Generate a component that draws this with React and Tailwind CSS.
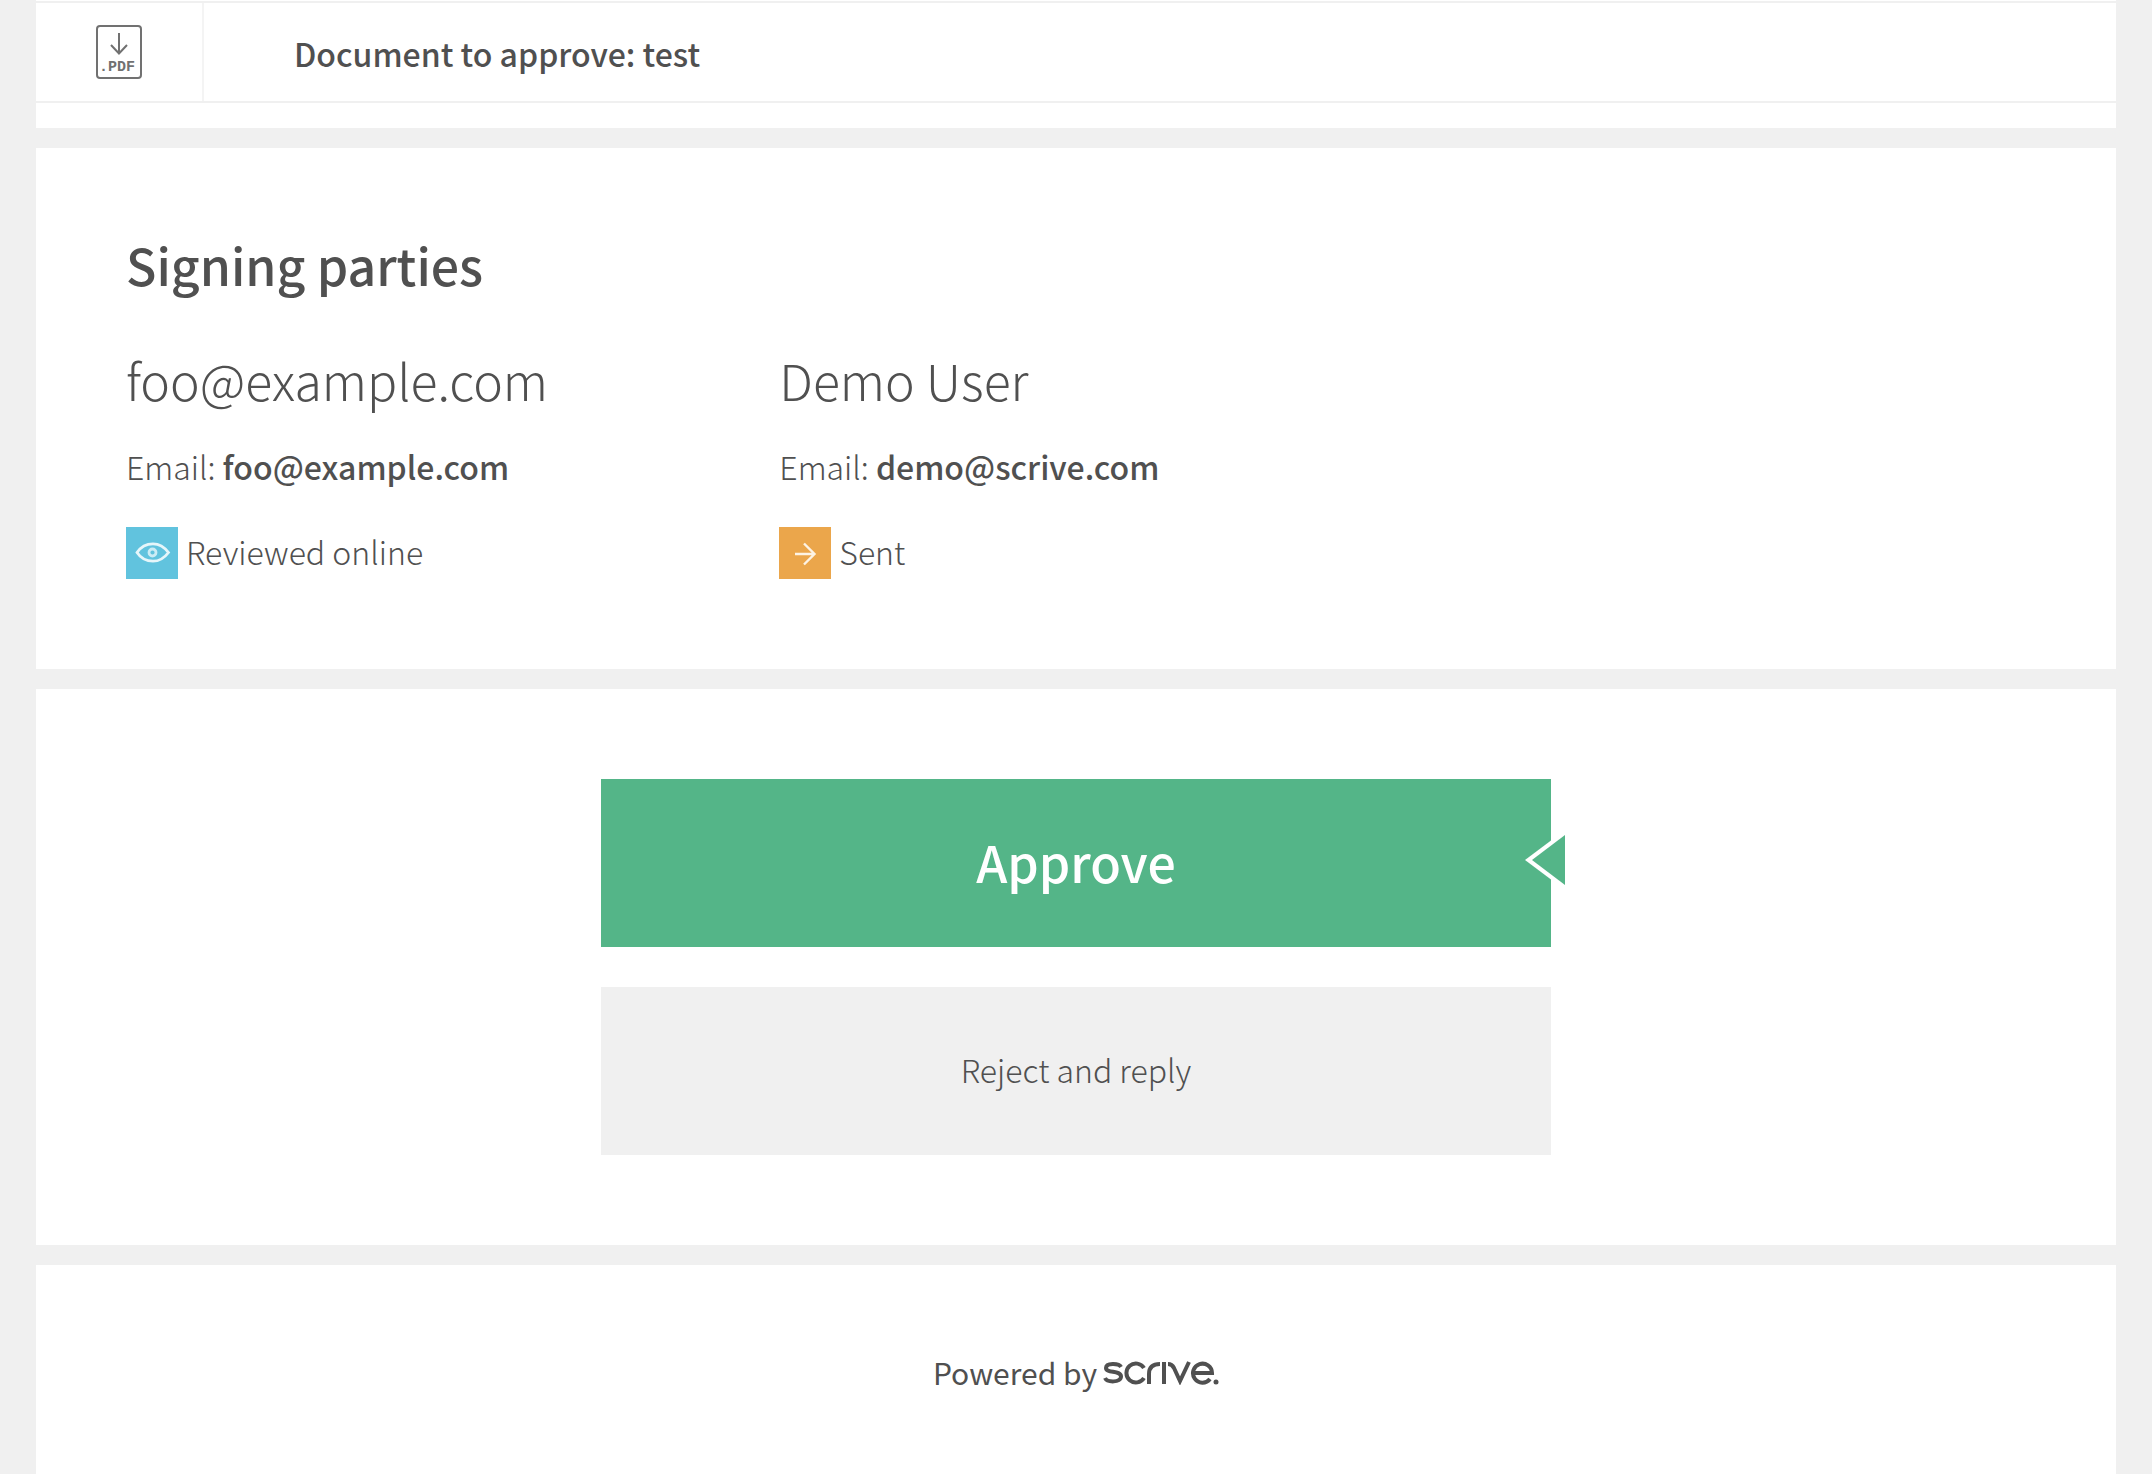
const parties = [
  { name: "foo@example.com", email: "foo@example.com", status: "Reviewed online", kind: "reviewed" },
  { name: "Demo User", email: "demo@scrive.com", status: "Sent", kind: "sent" },
];

function PdfIcon() {
  return (
    <svg width="46" height="54" viewBox="0 0 46 54" fill="none" stroke="#717171" strokeWidth="2" aria-hidden="true">
      <rect x="1" y="1" width="44" height="52" rx="3" />
      <path d="M23 8v20M15 20l8 8.500l8-8.500" />
      <text x="3" y="46" fill="#717171" stroke="none" className="font-['Liberation_Mono',monospace] text-[15px] font-bold">
        .PDF
      </text>
    </svg>
  );
}

function StatusIcon({ kind }) {
  if (kind === "reviewed") {
    return (
      <svg className="h-[52px] w-[52px] shrink-0 bg-[#61c3de]" viewBox="0 0 52 52" fill="none" stroke="#e6f6fa" strokeWidth="2.800" aria-hidden="true">
        <path d="M11 25.500C15 19.500 20 16.800 27 16.800S38 19.500 42.500 25.500C38 31.500 34 34.200 27 34.200S15 31.500 11 25.500z" />
        <circle cx="26.500" cy="25.500" r="3.500" strokeOpacity="0.8" />
      </svg>
    );
  }
  return (
    <svg className="h-[52px] w-[52px] shrink-0 bg-[#eba64b]" viewBox="0 0 52 52" fill="none" stroke="#fdf3e4" strokeWidth="2.400" aria-hidden="true">
      <path d="M16 27h20M25 16.500L35.500 27L25 37.500" />
    </svg>
  );
}

function ScriveLogo() {
  return (
    <svg width="116" height="24" viewBox="0 0 116 24" fill="none" stroke="#505050" strokeWidth="4" aria-label="scrive">
      <path d="M18 6C16 2 3 1.500 3 7C3 12.500 18 9 18 15.500C18 22 4 21.500 2 17" />
      <path d="M41 7A9.500 9.500 0 1 0 41 17" />
      <path d="M46 23V13Q46 3 57 3" />
      <path d="M61 1v22" />
      <path d="M65 3Q69 3 71 7L77 20L86 1" />
      <path d="M91 12H109A9.500 9.500 0 1 0 107 18" />
      <circle cx="113" cy="21" r="2.500" fill="#505050" stroke="none" />
    </svg>
  );
}

function Party({ party }) {
  return (
    <div>
      <h3 className="text-[50px] leading-[52px] font-light">{party.name}</h3>
      <p className="mt-[41px] leading-10">
        Email: <b className="font-medium">{party.email}</b>
      </p>
      <div className="mt-[41px] flex items-start gap-2">
        <StatusIcon kind={party.kind} />
        <span className="leading-12">{party.status}</span>
      </div>
    </div>
  );
}

function App() {
  return (
    <div className="min-h-screen overflow-hidden bg-[#f0f0f0] px-9 font-['Noto_Sans_CJK_SC',sans-serif] text-[32px] font-light text-[#505050]">
      <header className="bg-white pt-px pb-[25px]">
        <div className="flex items-stretch border-y-2 border-[#f0f0f0]">
          <a href="#pdf" aria-label="Download PDF" className="flex w-[168px] items-center justify-center border-r-2 border-[#f4f4f4]">
            <PdfIcon />
          </a>
          <h1 className="pt-[30px] pb-7 pl-[90px] leading-10 font-medium">Document to approve: test</h1>
        </div>
      </header>

      <main className="mt-5 flex flex-col gap-5">
        <section className="bg-white p-[90px]">
          <h2 className="text-[50px] leading-[52px] font-medium">Signing parties</h2>
          <div className="mt-[63px] grid grid-cols-3 gap-x-[60px]">
            {parties.map((party) => (
              <Party key={party.email} party={party} />
            ))}
          </div>
        </section>

        <section className="bg-white p-[90px]">
          <div className="mx-auto flex max-w-[950px] flex-col gap-10">
            <button type="button" className="relative bg-[#54b588] pt-14 pb-[60px] text-[50px] leading-[52px] font-medium text-white">
              Approve
              <svg className="absolute top-[51px] -right-3.5" width="40" height="60" viewBox="0 0 40 60" aria-hidden="true">
                <path d="M0 30L40 0V60z" fill="#fff" />
                <path d="M7 30L40 5V55z" fill="#54b588" />
              </svg>
            </button>
            <button type="button" className="bg-[#f0f0f0] pt-14 pb-[60px] leading-[52px] font-light">
              Reject and reply
            </button>
          </div>
        </section>
      </main>

      <footer className="mt-5 flex items-baseline justify-center gap-1.5 bg-white pt-[87px] pb-[90px] text-[30px] leading-10 font-normal">
        Powered by <ScriveLogo />
      </footer>
    </div>
  );
}

export default App;
